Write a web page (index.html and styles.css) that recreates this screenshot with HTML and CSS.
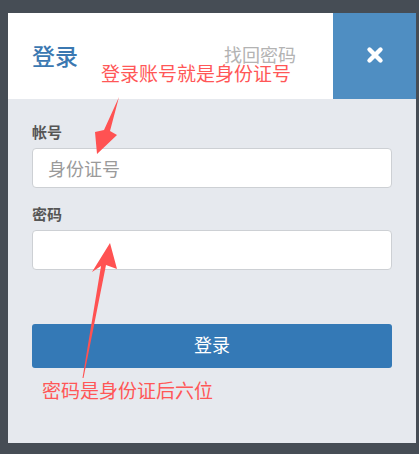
FILE: index.html
```html
<!DOCTYPE html>
<html lang="zh-CN">
<head>
<meta charset="utf-8">
<title>登录</title>
<link rel="stylesheet" href="styles.css">
</head>
<body>
<div class="page">
  <div class="card">
    <div class="header">
      <div class="head-main">
        <span class="title">登录</span>
        <a class="forgot">找回密码</a>
      </div>
      <div class="close">
        <svg width="18" height="18" viewBox="0 0 18 18"><path d="M3.5 3.5 L14.5 14.5 M14.5 3.5 L3.5 14.5" stroke="#fff" stroke-width="4.4" stroke-linecap="round"/></svg>
      </div>
    </div>
    <div class="body">
      <label class="label">帐号</label>
      <div class="input"><span class="placeholder">身份证号</span></div>
      <label class="label second">密码</label>
      <div class="input"></div>
      <button class="btn">登录</button>
    </div>
  </div>
  <div class="note note-1">登录账号就是身份证号</div>
  <div class="note note-2">密码是身份证后六位</div>
  <svg class="arrows" width="419" height="454" viewBox="0 0 419 454">
    <polygon points="119,97 110,131 117,135 97,154 95,132 104,130" fill="#ff5252"/>
    <polygon points="110,243 117,269 106,265 83.5,378 82.5,378 101,266 92,272" fill="#ff5252"/>
  </svg>
</div>
</body>
</html>
```

FILE: styles.css
```css
html, body {
  margin: 0;
  padding: 0;
}
body {
  background: #464d55;
  font-family: "Noto Sans CJK SC", "Noto Sans", sans-serif;
}
.page {
  position: relative;
  width: 419px;
  height: 454px;
  padding-top: 13px;
  box-sizing: border-box;
}
.card {
  margin-left: 8px;
  width: 408px;
  height: 430px;
  background: #e6e9ee;
  display: flex;
  flex-direction: column;
}
.header {
  height: 86px;
  display: flex;
}
.head-main {
  flex: 1;
  background: #fff;
  display: flex;
  align-items: center;
  justify-content: space-between;
  padding: 0 37px 0 24px;
}
.title {
  font-size: 23px;
  color: #3b78b1;
  font-weight: 500;
  margin-top: -2px;
}
.forgot {
  font-size: 18px;
  line-height: 16px;
  color: #b3b3b3;
  margin-top: -4px;
}
.close {
  width: 83px;
  background: #4f8ec2;
  display: flex;
  align-items: center;
  justify-content: center;
  padding-bottom: 2px;
}
.body {
  padding: 23px 24px 0 24px;
  display: flex;
  flex-direction: column;
}
.label {
  font-size: 15px;
  line-height: 20px;
  font-weight: 700;
  color: #555;
}
.label.second {
  margin-top: 16px;
}
.input {
  margin-top: 6px;
  height: 40px;
  box-sizing: border-box;
  background: #fff;
  border: 1px solid #cdd0d4;
  border-radius: 4px;
  display: flex;
  align-items: center;
  padding-left: 15px;
}
.placeholder {
  font-size: 18px;
  color: #9a9a9a;
}
.btn {
  margin-top: 54px;
  height: 44px;
  border: none;
  border-radius: 3px;
  background: #3479b6;
  color: #fff;
  font-family: inherit;
  font-size: 18px;
  line-height: 20px;
  padding: 0 0 4px 0;
}
.note {
  position: absolute;
  font-size: 19px;
  line-height: 16px;
  color: #ff5757;
  white-space: nowrap;
}
.note-1 {
  left: 101px;
  top: 65px;
}
.note-2 {
  left: 42px;
  top: 382px;
}
.arrows {
  position: absolute;
  left: 0;
  top: 0;
}
```
